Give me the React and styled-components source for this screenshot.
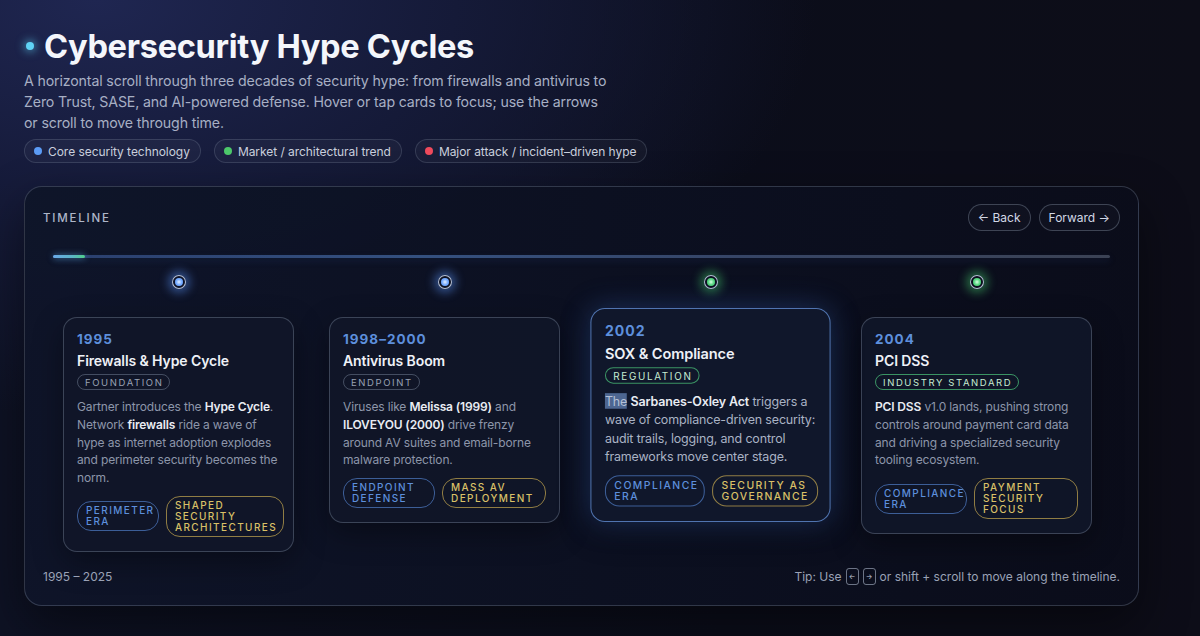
import React from 'react';
import styled, { createGlobalStyle, css } from 'styled-components';

const GlobalStyle = createGlobalStyle`
  html, body {
    margin: 0;
    padding: 0;
    height: 100%;
  }
  body {
    background: #0a0c17;
    font-family: Inter, "Noto Sans", "Liberation Sans", sans-serif;
    -webkit-font-smoothing: antialiased;
  }
`;

const Page = styled.div`
  width: 1200px;
  height: 636px;
  overflow: hidden;
  box-sizing: border-box;
  padding: 27px 24px 0 24px;
  background:
    radial-gradient(ellipse 900px 520px at 8% 0%, #1f2651 0%, #151a38 40%, rgba(12, 14, 28, 0) 80%),
    linear-gradient(90deg, #0e1224 0%, #0b0d1a 60%, #0d0d18 100%);
`;

const TitleRow = styled.div`
  display: flex;
  align-items: center;
  gap: 10px;
`;

const TitleDot = styled.span`
  width: 8px;
  height: 8px;
  border-radius: 50%;
  background: #5fd3f5;
  box-shadow: 0 0 8px 2px rgba(95, 211, 245, 0.55);
  margin-left: 2px;
`;

const Title = styled.h1`
  margin: 0;
  font-size: 32.6px;
  font-weight: 700;
  letter-spacing: -0.3px;
  color: #f4f6fb;
  line-height: 38px;
`;

const Subtitle = styled.p`
  margin: 5px 0 0 0;
  font-size: 14.2px;
  letter-spacing: -0.15px;
  line-height: 21px;
  color: #a7afc4;
`;

const Legend = styled.div`
  display: flex;
  gap: 13px;
  margin-top: 6px;
`;

const LegendPill = styled.div`
  display: flex;
  align-items: center;
  gap: 6px;
  height: 24px;
  box-sizing: border-box;
  padding: 0 10px 0 9px;
  border-radius: 12px;
  border: 1px solid rgba(148, 163, 184, 0.22);
  background: rgba(255, 255, 255, 0.03);
  font-size: 12px;
  letter-spacing: -0.05px;
  color: #c9cfdd;
`;

const LegendDot = styled.span`
  width: 8px;
  height: 8px;
  border-radius: 50%;
  background: ${(p) => p.$color};
`;

const Panel = styled.section`
  margin-top: 23px;
  width: 1115px;
  height: 420px;
  box-sizing: border-box;
  padding: 17px 18px 0 18px;
  border-radius: 18px;
  border: 1px solid rgba(148, 163, 184, 0.28);
  background: linear-gradient(90deg, rgba(15, 21, 41, 0.96) 0%, rgba(12, 16, 32, 0.96) 60%, rgba(11, 13, 26, 0.96) 100%);
  box-shadow: 0 20px 50px rgba(0, 0, 0, 0.45);
  display: flex;
  flex-direction: column;
`;

const PanelHeader = styled.div`
  display: flex;
  align-items: center;
  justify-content: space-between;
  height: 27px;
`;

const PanelLabel = styled.div`
  font-size: 11.5px;
  letter-spacing: 1.8px;
  color: #aeb6c9;
  font-weight: 500;
`;

const NavButtons = styled.div`
  display: flex;
  gap: 8px;
`;

const NavButton = styled.button`
  height: 27px;
  padding: 0 9px;
  border-radius: 14px;
  border: 1px solid rgba(148, 163, 184, 0.35);
  background: rgba(255, 255, 255, 0.02);
  color: #d2d8e6;
  font-family: inherit;
  font-size: 12px;
  display: flex;
  align-items: center;
  gap: 4px;
`;

const Track = styled.div`
  margin: 24px 10px 0 10px;
  height: 3px;
  border-radius: 2px;
  background: linear-gradient(90deg, #2a3f6e 0%, #34507f 35%, #364566 65%, #3b4254 100%);
  box-shadow: 0 3px 6px rgba(40, 70, 130, 0.25);
`;

const Progress = styled.div`
  height: 100%;
  border-radius: 2px;
  background: linear-gradient(90deg, #6aa9e8 0%, #5cb6c8 60%, #4fd08a 100%);
  box-shadow: 0 0 6px rgba(100, 180, 240, 0.7);
`;

const Row = styled.div`
  display: flex;
  align-items: flex-start;
  gap: 35px;
  padding: 17px 0 0 20px;
  height: 292px;
  box-sizing: border-box;
`;

const Item = styled.div`
  width: 231px;
  flex: none;
  display: flex;
  flex-direction: column;
  align-items: center;
  gap: 28px;
`;

const Dot = styled.span`
  width: 14px;
  height: 14px;
  box-sizing: border-box;
  border-radius: 50%;
  padding: 2px;
  border: 1.5px solid rgba(210, 222, 245, 0.85);
  background: radial-gradient(circle, ${(p) => p.$light} 0%, ${(p) => p.$color} 55%) content-box;
  box-shadow: 0 0 10px 4px ${(p) => p.$glow};
`;

const Desc = styled.p`
  margin: 8px 0 0 0;
  font-size: 12px;
  letter-spacing: -0.15px;
  line-height: 17.8px;
  color: #8d96aa;

  b {
    color: #e9ecf3;
    font-weight: 600;
  }
`;

const Card = styled.article`
  width: 100%;
  box-sizing: border-box;
  padding: 13px 13px 14px 13px;
  border-radius: 14px;
  border: 1px solid rgba(148, 163, 184, 0.33);
  background: rgba(16, 22, 40, 0.92);
  box-shadow: 0 10px 30px rgba(0, 0, 0, 0.35);
  ${(p) =>
    p.$focused &&
    css`
      transform: translateY(-5px) scale(1.04);
      border-color: rgba(96, 140, 210, 0.8);
      background: rgba(17, 24, 44, 0.96);
      box-shadow: 0 0 28px rgba(60, 110, 200, 0.35), 0 10px 30px rgba(0, 0, 0, 0.35);

      ${Desc} {
        color: #aab3c5;
      }
    `}
`;

const Year = styled.div`
  font-size: 13.5px;
  font-weight: 700;
  letter-spacing: 1px;
  color: #5d8fdc;
  line-height: 17px;
`;

const CardTitle = styled.h3`
  margin: 4px 0 0 0;
  font-size: 14px;
  font-weight: 600;
  letter-spacing: -0.1px;
  color: #eef1f7;
  line-height: 18px;
`;

const Tag = styled.span`
  display: inline-block;
  margin-top: 4px;
  padding: 0 6px 0 7px;
  height: 16px;
  line-height: 15px;
  box-sizing: border-box;
  border-radius: 8px;
  font-size: 9.5px;
  letter-spacing: 1.6px;
  border: 1px solid ${(p) => (p.$green ? 'rgba(74, 190, 120, 0.75)' : 'rgba(148, 163, 184, 0.4)')};
  color: ${(p) => (p.$green ? '#c6ecd2' : '#98a1b4')};
`;

const Selected = styled.span`
  background: rgba(98, 130, 180, 0.75);
  color: #b4c0d6;
`;

const Chips = styled.div`
  display: flex;
  align-items: center;
  gap: 7px;
  margin-top: 9px;
`;

const Chip = styled.span`
  display: inline-block;
  box-sizing: border-box;
  padding: 3px 8px 3px 8px;
  border-radius: 14px;
  font-size: 10px;
  line-height: 11px;
  font-weight: 500;
  letter-spacing: 1.4px;
  border: 1px solid ${(p) => (p.$gold ? 'rgba(200, 170, 80, 0.7)' : 'rgba(80, 125, 200, 0.7)')};
  color: ${(p) => (p.$gold ? '#d9c067' : '#5d8fdc')};
  max-width: ${(p) => p.$max || 'none'};
`;

const Footer = styled.div`
  display: flex;
  align-items: center;
  justify-content: space-between;
  margin-top: auto;
  height: 54px;
  padding-bottom: 4px;
  box-sizing: border-box;
  font-size: 12px;
  color: #9aa2b6;
`;

const Tip = styled.div`
  display: flex;
  align-items: center;
  gap: 4px;
`;

const Key = styled.kbd`
  display: inline-flex;
  align-items: center;
  justify-content: center;
  width: 13px;
  height: 17px;
  box-sizing: border-box;
  border-radius: 3px;
  border: 1px solid rgba(190, 200, 220, 0.55);
  font-family: inherit;
  font-size: 7px;
  color: #c9cfdd;
`;

const COLORS = {
  core: { color: '#6ea6ff', light: '#e3efff', glow: 'rgba(90, 150, 255, 0.45)' },
  trend: { color: '#4fd47a', light: '#d8ffe3', glow: 'rgba(70, 210, 110, 0.45)' },
};

const events = [
  {
    year: '1995',
    title: 'Firewalls & Hype Cycle',
    tag: 'FOUNDATION',
    kind: 'core',
    desc: (
      <>
        Gartner introduces the <b>Hype Cycle</b>. Network <b>firewalls</b> ride a wave of hype as internet
        adoption explodes and perimeter security becomes the norm.
      </>
    ),
    chips: [
      { text: 'PERIMETER ERA', max: '82px' },
      { text: 'SHAPED SECURITY ARCHITECTURES', gold: true, max: '118px' },
    ],
  },
  {
    year: '1998–2000',
    title: 'Antivirus Boom',
    tag: 'ENDPOINT',
    kind: 'core',
    desc: (
      <>
        Viruses like <b>Melissa (1999)</b> and <b>ILOVEYOU (2000)</b> drive frenzy around AV suites and
        email-borne malware protection.
      </>
    ),
    chips: [
      { text: 'ENDPOINT DEFENSE', max: '94px' },
      { text: 'MASS AV DEPLOYMENT', gold: true, max: '106px' },
    ],
  },
  {
    year: '2002',
    title: 'SOX & Compliance',
    tag: 'REGULATION',
    kind: 'trend',
    focused: true,
    desc: (
      <>
        <Selected>The</Selected> <b>Sarbanes-Oxley Act</b> triggers a wave of compliance-driven security:
        audit trails, logging, and control frameworks move center stage.
      </>
    ),
    chips: [
      { text: 'COMPLIANCE ERA', max: '96px' },
      { text: 'SECURITY AS GOVERNANCE', gold: true, max: '112px' },
    ],
  },
  {
    year: '2004',
    title: 'PCI DSS',
    tag: 'INDUSTRY STANDARD',
    kind: 'trend',
    desc: (
      <>
        <b>PCI DSS</b> v1.0 lands, pushing strong controls around payment card data and driving a
        specialized security tooling ecosystem.
      </>
    ),
    chips: [
      { text: 'COMPLIANCE ERA', max: '92px' },
      { text: 'PAYMENT SECURITY FOCUS', gold: true, max: '106px' },
    ],
  },
];

export default function App() {
  return (
    <>
      <GlobalStyle />
      <Page>
        <TitleRow>
          <TitleDot />
          <Title>Cybersecurity Hype Cycles</Title>
        </TitleRow>
        <Subtitle>
          A horizontal scroll through three decades of security hype: from firewalls and antivirus to
          <br />
          Zero Trust, SASE, and AI-powered defense. Hover or tap cards to focus; use the arrows
          <br />
          or scroll to move through time.
        </Subtitle>
        <Legend>
          <LegendPill>
            <LegendDot $color="#5b9bf5" />
            Core security technology
          </LegendPill>
          <LegendPill>
            <LegendDot $color="#4cc86a" />
            Market / architectural trend
          </LegendPill>
          <LegendPill>
            <LegendDot $color="#ef4a5c" />
            Major attack / incident–driven hype
          </LegendPill>
        </Legend>

        <Panel>
          <PanelHeader>
            <PanelLabel>TIMELINE</PanelLabel>
            <NavButtons>
              <NavButton>← Back</NavButton>
              <NavButton>Forward →</NavButton>
            </NavButtons>
          </PanelHeader>
          <Track>
            <Progress style={{ width: '3%' }} />
          </Track>
          <Row>
            {events.map((e) => {
              const c = COLORS[e.kind];
              return (
                <Item key={e.year}>
                  <Dot $color={c.color} $light={c.light} $glow={c.glow} />
                  <Card $focused={e.focused}>
                    <Year>{e.year}</Year>
                    <CardTitle>{e.title}</CardTitle>
                    <Tag $green={e.kind === 'trend'}>{e.tag}</Tag>
                    <Desc>{e.desc}</Desc>
                    <Chips>
                      {e.chips.map((ch) => (
                        <Chip key={ch.text} $gold={ch.gold} $max={ch.max}>
                          {ch.text}
                        </Chip>
                      ))}
                    </Chips>
                  </Card>
                </Item>
              );
            })}
          </Row>
          <Footer>
            <span>1995 – 2025</span>
            <Tip>
              Tip: Use <Key>←</Key>
              <Key>→</Key> or shift + scroll to move along the timeline.
            </Tip>
          </Footer>
        </Panel>
      </Page>
    </>
  );
}
